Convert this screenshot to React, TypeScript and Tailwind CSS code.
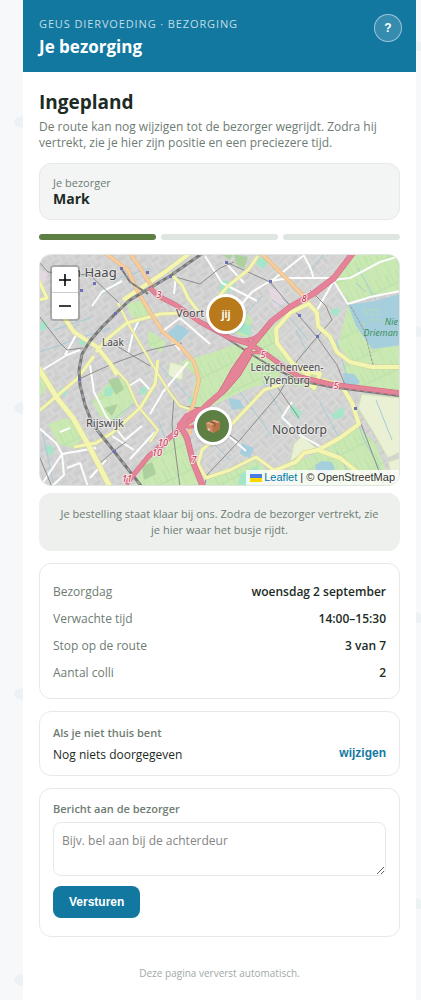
import type { ReactNode } from "react";

type Road = { d: string; w: number };

const motorways: Road[] = [
  { d: "M150 288 L158 296 L176 305 L200 322 L230 338 L250 344 L266 354 L284 367 L300 377 L330 384 L400 393", w: 4 },
  { d: "M353 253 L334 278 L313 294 L290 307 L272 321 L253 344 L243 360 L235 376 L222 392 L208 404 L200 412 L187 416 L180 425 L187 438 L193 462 L203 487", w: 5 },
  { d: "M200 414 L180 428 L164 443 L148 457 L126 484", w: 4 },
  { d: "M240 340 Q258 341 268 324 M244 358 Q252 349 266 355 M181 425 Q200 434 207 406 M184 420 Q192 408 206 408", w: 2 },
];

// Stretch where the carriageways spread apart
const spread = ["246 348 252 356 240 376 226 392 212 402 222 386 232 368"];

const primary: Road[] = [
  { d: "M105 253 L128 270 L138 292 L150 312 L163 332 L180 346 L194 362 L199 380 L194 402 L190 415 L190 434", w: 3 },
  { d: "M130 253 L140 268 L154 290 M262 254 L288 280 L308 301", w: 3 },
];

const secondary: Road[] = [
  { d: "M190 253 L165 272 L123 300 M63 316 L74 332 L97 347 L110 363 L117 375", w: 4 },
  { d: "M182 313 L160 314 L127 323 L107 339 L96 352 M39 281 L47 298 L39 300", w: 3 },
  { d: "M170 273 L182 285 L188 298 L198 311 M258 256 L248 270 L228 286 L214 302", w: 3 },
  { d: "M118 303 L130 327 L145 352 L158 374 L170 393 L180 406 L196 411", w: 2 },
  { d: "M110 363 L127 382 L137 405 L158 430 L150 442", w: 2 },
  { d: "M310 303 L290 313 L276 329 L277 343 L293 364 L310 376", w: 4 },
  { d: "M308 303 L317 313 L318 326 L330 337 L337 352 L350 362 L372 367 L400 367", w: 4 },
  { d: "M36 364 L57 398 L73 418 L90 448 L110 487", w: 5 },
  { d: "M39 411 L77 379 L94 356 M74 447 L96 443 L112 433 L140 408 L155 384 L158 360", w: 3 },
  { d: "M322 380 L342 386 L352 403 L359 424 L340 438 L318 450 L304 453 L296 462 L266 474", w: 4 },
  { d: "M318 450 L340 458 L360 474 L376 486 M293 364 L304 370 L320 374 L314 388 L306 382", w: 4 },
  { d: "M282 384 L264 390 L232 424 L202 450 L198 464 L206 478 L230 470 L256 457 L276 472", w: 3 },
];

const streets: Road[] = [
  { d: "M39 428 L56 443 L62 454 L96 448 M62 454 L64 475 L51 487 M67 468 L80 463 L88 487 M62 454 L42 484", w: 2 },
  { d: "M90 365 L94 392 L106 416 L125 440 L142 426 M129 386 L140 379 L150 390 M130 459 L155 432 M134 450 L112 436", w: 2 },
  { d: "M92 306 L102 292 L122 281 M65 355 L76 335 M128 354 L133 333 L139 320 M39 372 L67 355 L80 350", w: 2 },
  { d: "M205 256 L222 283 L257 301 M225 262 L244 283 M176 276 L174 294 M180 350 L163 331 L180 318 L210 344 M228 320 L252 292 L270 281 L290 278 L333 278", w: 2 },
  { d: "M333 280 L350 278 L380 262 L400 256 M348 304 L370 297 L400 291 M333 280 L348 304 M333 282 L316 312 M303 254 L310 267 L314 279 M270 282 L303 256", w: 2 },
  { d: "M282 417 L300 435 L323 448 M292 402 L282 417 M150 414 L163 392 L188 362 M60 432 L70 428 M106 460 L90 478 M222 430 L246 451", w: 2 },
];

const rails: Road[] = [
  { d: "M216 244 L190 262 L170 276 L150 288 L130 300 L117 312 L102 327 L90 341 L82 354 L79 370 L80 385 L85 405 L93 425 L113 450 L142 487", w: 3 },
  { d: "M121 268 L130 282 L148 294 M205 324 L240 347 L270 366 L300 381 L330 387 L400 396", w: 2 },
];

const tracks: Road[] = [
  { d: "M39 262 L48 272 L90 275 L119 303 M39 316 L59 342 L67 350 L83 348 M117 346 L130 354 L150 366", w: 1 },
  { d: "M226 262 L270 282 L317 337 L337 365 L345 385 L355 408 L385 487 M310 290 L326 306 L332 320 L317 337 L297 361 L279 394", w: 1 },
  { d: "M279 394 L240 440 L207 475 L204 487 M174 396 L172 425 L180 487 M278 388 L299 418 M222 430 L238 441", w: 1 },
  { d: "M40 458 L52 487 M79 379 L112 364 L150 350 L182 343 M110 485 L99 464 L115 450 L126 442", w: 1 },
  { d: "M172 276 L200 284 L220 268 L234 262 M170 394 L182 406 L200 408", w: 1 },
];

const greens = [
  "356 254 400 254 400 290 348 304 334 280",
  "180 362 214 352 236 344 252 348 268 356 284 368 276 382 250 388 216 404 202 410 190 408 196 376",
  "48 424 66 418 77 424 84 438 72 448 58 444",
  "106 385 122 378 130 386 134 402 116 422 100 416 92 402",
  "170 436 178 430 186 440 194 470 202 486 168 486 160 462",
  "146 460 160 446 170 460 178 486 134 486",
  "250 344 276 324 290 311 304 306 280 322 274 344 290 364",
  "343 364 400 369 400 392 346 386",
  "318 452 344 460 374 486 300 486 282 474 298 462",
  "356 424 376 444 392 486 376 486 360 472 326 450",
  "348 304 356 322 374 349 400 345 400 366 352 362 338 346",
  "39 370 48 376 46 390 39 398",
  "212 304 226 292 240 304 252 320 248 338 222 328",
  "290 370 322 376 314 388 284 384",
  "148 330 166 342 162 352 148 346",
  "208 478 240 468 256 460 270 474 262 486 206 486",
  "126 304 142 300 152 316 132 318",
];

const mints = [
  "60 388 67 388 66 396 60 395",
  "105 388 114 386 112 396 104 396",
  "46 445 53 446 53 455 46 453",
  "240 322 252 326 250 336 238 332",
  "220 280 236 282 230 292 220 292",
  "258 257 270 260 263 269 256 264",
  "331 309 340 308 338 316 331 314",
  "291 404 302 412 298 420 290 410",
  "331 415 343 406 344 416 335 420",
  "240 474 258 466 260 486 238 486",
  "41 322 47 322 46 330 40 330",
  "80 338 86 339 85 346 79 344",
  "189 398 196 396 194 404 188 403",
  "140 388 147 386 146 394 140 394",
];

const fields = [
  "362 394 400 398 400 452 388 458 372 430 358 408",
  "294 444 302 436 316 448 304 452 290 462",
  "388 462 400 458 400 486 394 486",
  "170 362 184 366 182 380 168 376",
];

const lakes = [
  "348 305 374 301 400 294 400 345 372 349 356 326",
  "343 373 354 374 360 382 352 390 344 386",
  "315 465 322 461 332 462 335 469 324 474 316 471",
  "166 334 178 324 190 331 178 343",
  "242 443 254 448 250 458 240 454",
  "228 398 240 400 244 408 232 410",
];

const canals =
  "M39 352 L110 328 M94 302 L122 276 M127 345 L143 318 M54 330 L90 318 M290 318 L308 340 M310 272 L324 254 M282 298 L296 312 M352 308 L370 345 M356 283 L366 292 M358 268 L376 300 M42 430 L54 486 M158 420 L166 440 M160 366 L190 398 M240 392 L272 436 M262 380 L290 426 M320 402 L340 440 M352 406 L364 440 M376 400 L392 440 M196 426 L230 460 M112 420 L134 404 M337 452 L356 486 M362 436 L388 484 M336 340 L350 386 M272 300 L284 308 M296 330 L306 350 M244 316 L262 296 M120 278 L150 268";

const stations = ["121 268", "94 283", "81 290", "147 272", "115 313", "170 276", "226 262", "270 281", "299 315", "317 336", "355 408", "79 379", "114 451"];

const shields = [
  { n: "3", x: 159, y: 298 },
  { n: "8", x: 304, y: 302 },
  { n: "5", x: 263, y: 358 },
  { n: "5", x: 336, y: 389 },
  { n: "9", x: 176, y: 437 },
  { n: "10", x: 163, y: 446 },
  { n: "10", x: 157, y: 456 },
  { n: "11", x: 127, y: 482 },
  { n: "7", x: 194, y: 463 },
];

function Lines({ roads, color, extra = 0, dash }: { roads: Road[]; color: string; extra?: number; dash?: string }) {
  return (
    <g fill="none" stroke={color} strokeLinejoin="round" strokeDasharray={dash}>
      {roads.map((r) => (
        <path key={r.d} d={r.d} strokeWidth={r.w + extra} />
      ))}
    </g>
  );
}

function Polys({ items, fill, stroke }: { items: string[]; fill: string; stroke?: string }) {
  return (
    <g fill={fill} stroke={stroke}>
      {items.map((p) => (
        <polygon key={p} points={p} />
      ))}
    </g>
  );
}

function MapTiles() {
  return (
    <svg viewBox="40 255 359 230" preserveAspectRatio="xMidYMid slice" className="block h-full w-full" aria-hidden="true">
      <defs>
        <pattern id="blocksA" width="17" height="13" patternUnits="userSpaceOnUse" patternTransform="rotate(-33)">
          <rect width="17" height="13" fill="#d2d1d1" />
          <path d="M0 0H17M0 6H11M0 0V13M11 0V6M6 6V13" stroke="#dededd" fill="none" />
          <path d="M2 3H9M8 10H15" stroke="#c9c8c8" fill="none" />
        </pattern>
        <pattern id="blocksB" width="14" height="19" patternUnits="userSpaceOnUse" patternTransform="rotate(-42)">
          <rect width="14" height="19" fill="#d3d2d2" />
          <path d="M0 0H14M0 5H14M0 12H9M0 0V19M9 5V19" stroke="#dededd" fill="none" />
          <path d="M2 9H7M11 8V16" stroke="#c8c9cb" fill="none" />
        </pattern>
        <pattern id="parcels" width="26" height="11" patternUnits="userSpaceOnUse" patternTransform="rotate(64)">
          <path d="M0 0H26M0 5H12M12 0V11" stroke="#b9dfa9" fill="none" />
        </pattern>
      </defs>
      <rect x="39" y="254" width="362" height="232" fill="url(#blocksA)" />
      <polygon points="250 254 353 254 345 380 360 425 300 486 205 486 200 412 250 343" fill="url(#blocksB)" />
      <Polys items={greens} fill="#c9e8b2" />
      <Polys items={greens} fill="url(#parcels)" />
      <Polys items={fields} fill="#eaf0d3" stroke="#cfe3b4" />
      <Polys items={mints} fill="#a5e6c8" />
      <path d="M108 380 l10 -3 6 12 -8 6z M234 254 l14 3 -4 12 -8 -5z M215 250 l18 2 -3 8z M104 408 l14 -4 -6 12z M142 466 l10 -4 4 12 -12 6z" fill="#add19e" />
      <path d="M268 288 l12 2 8 12 -14 6z M39 268 l9 6 -4 10 -5 -2z" fill="#e3d7e0" />
      <Polys items={lakes} fill="#a6cfdd" />
      <path d={canals} fill="none" stroke="#a3cbd6" />
      <path d="M363 310 h16 M364 314 h14 M370 320 h10 M362 324 h6" stroke="#b7df9f" strokeDasharray="4 2" />
      <path d="M333 280 L350 305 L364 330 L374 368" fill="none" stroke="#9b9b9b" strokeDasharray="3 1" />
      <Lines roads={streets} color="#fdfdfd" />
      <Lines roads={tracks} color="#8c8c8c" />
      <Lines roads={secondary} color="#d3d49c" extra={1} />
      <Lines roads={secondary} color="#f4f5ae" />
      <Lines roads={primary} color="#e2b482" extra={1} />
      <Lines roads={primary} color="#f8cd9c" />
      <Lines roads={rails} color="#777777" />
      <Lines roads={rails} color="#a0a0a0" extra={-1} dash="4 4" />
      <Lines roads={motorways} color="#d26a80" extra={1} />
      <Polys items={spread} fill="#e58499" stroke="#d26a80" />
      <Lines roads={motorways} color="#e58499" />
      <g fill="#6d70b5">
        {stations.map((s) => {
          const [x, y] = s.split(" ").map(Number);
          return <rect key={s} x={x - 1} y={y - 1} width="3" height="3" />;
        })}
      </g>
      <g fontFamily="'Noto Sans', sans-serif" fontStyle="italic" fontSize="9" fill="#c02c4c" stroke="#f7e2e5" strokeWidth="2" paintOrder="stroke" textAnchor="middle">
        {shields.map((s) => (
          <text key={s.n + s.x} x={s.x} y={s.y}>{s.n}</text>
        ))}
      </g>
      <g fontFamily="'Noto Sans', sans-serif" fill="#4a4a4a" stroke="#eeeeee" strokeOpacity="0.7" strokeWidth="2" paintOrder="stroke">
        <text x="73" y="277" fontSize="13">n Haag</text>
        <text x="176" y="317" fontSize="11">Voort</text>
        <text x="102" y="346" fontSize="10">Laak</text>
        <text x="86" y="427" fontSize="11">Rijswijk</text>
        <text x="272" y="434" fontSize="12">Nootdorp</text>
        <text x="287" y="371" fontSize="10" textAnchor="middle">Leidschenveen-</text>
        <text x="287" y="384" fontSize="10" textAnchor="middle">Ypenburg</text>
      </g>
      <g fontFamily="'Noto Sans', sans-serif" fontStyle="italic" fontSize="9" fill="#3f8f5c" textAnchor="end">
        <text x="398" y="325">Nie</text>
        <text x="398" y="336">Drieman</text>
      </g>
    </svg>
  );
}

function PackageIcon() {
  return (
    <svg viewBox="0 0 16 16" className="size-4" aria-hidden="true">
      <path d="M1 5 L9 2 L15 4 L15 11 L8 15 L2 12Z" fill="#c98a5d" />
      <path d="M1 5 L9 2 L15 4 L7 7Z" fill="#e0ab80" />
      <path d="M7 7 L15 4 L15 11 L8 15Z" fill="#b87449" />
      <path d="M4 4 L6 3 L12 5 L9 6Z" fill="#8a5638" />
      <path d="M9 6 L11 5 L11 8 L9 9Z" fill="#9c6240" />
      <path d="M3 10 L5 11 L5 13 L3 12Z" fill="#e5cfd9" />
    </svg>
  );
}

function DeliveryMap() {
  return (
    <div className="relative mt-3.5 h-[232px] overflow-hidden rounded-xl border border-[#dfe5e1]">
      <MapTiles />
      <div className="absolute top-2.5 left-2.5 flex flex-col overflow-hidden rounded-sm border-2 border-black/20 bg-clip-padding text-black">
        <button type="button" aria-label="Inzoomen" className="grid size-[26px] place-items-center border-b border-[#cccccc] bg-white">
          <svg viewBox="0 0 12 12" className="size-3"><path d="M6 0V12M0 6H12" stroke="currentColor" strokeWidth="1.6" /></svg>
        </button>
        <button type="button" aria-label="Uitzoomen" className="grid size-[26px] place-items-center bg-white">
          <svg viewBox="0 0 12 12" className="size-3"><path d="M0 6H12" stroke="currentColor" strokeWidth="1.6" /></svg>
        </button>
      </div>
      <div className="absolute top-[39px] left-[166px] grid size-10 place-items-center rounded-full border-3 border-white bg-[#b97a1c] text-[10px] font-bold text-white shadow">
        jij
      </div>
      <div className="absolute top-[152px] left-[154px] grid size-[38px] place-items-center rounded-full border-3 border-white bg-[#5d7f43] shadow">
        <PackageIcon />
      </div>
      <div className="absolute right-0 bottom-0 flex items-center gap-[3px] bg-white/80 px-1 font-['Liberation_Sans',sans-serif] text-[11px] leading-[15px] text-[#333333]">
        <a href="#leaflet" className="flex items-center gap-0.5 text-[#0078a8]">
          <svg viewBox="0 0 12 8" className="h-2 w-3"><path fill="#4c7be1" d="M0 0h12v4H0z" /><path fill="#ffd500" d="M0 4h12v4H0z" /></svg>
          Leaflet
        </a>
        <span>| © OpenStreetMap</span>
      </div>
    </div>
  );
}

function Card({ className = "", children }: { className?: string; children: ReactNode }) {
  return <section className={`rounded-xl border border-[#e6e9e8] px-[13px] ${className}`}>{children}</section>;
}

const details = [
  ["Bezorgdag", "woensdag 2 september"],
  ["Verwachte tijd", "14:00–15:30"],
  ["Stop op de route", "3 van 7"],
  ["Aantal colli", "2"],
];

export default function App() {
  return (
    <div className="relative min-h-screen bg-[#f6f8fa] pr-[5px] pl-[23px] font-['Open_Sans','Noto_Sans',sans-serif] text-[12px] leading-4 text-[#1c2b24]">
      {/* Faint spots behind the column */}
      <svg className="absolute inset-0 h-full w-full" aria-hidden="true">
        <defs>
          <pattern id="spots" width="401" height="286" patternUnits="userSpaceOnUse">
            <ellipse cx="24" cy="122" rx="10" ry="6" fill="#ecf1f4" />
          </pattern>
          <pattern id="spotsRight" width="421" height="286" patternUnits="userSpaceOnUse">
            <ellipse cx="415" cy="45" rx="9" ry="5" fill="#ecf1f4" transform="rotate(20 415 45)" />
          </pattern>
        </defs>
        <rect width="100" height="100%" fill="url(#spots)" />
        <rect width="421" height="100%" fill="url(#spotsRight)" />
      </svg>

      <div className="relative min-h-screen bg-white">
        <header className="flex h-[72px] items-start justify-between bg-[#1278a0] px-4 pt-3.5 text-white">
          <div>
            <p className="text-[11px] leading-5 tracking-[0.08em] text-white/75 uppercase">Geus Diervoeding · Bezorging</p>
            <p className="text-[17px] leading-[26px] font-bold">Je bezorging</p>
          </div>
          <button type="button" aria-label="Uitleg" className="-mr-0.5 grid size-7 place-items-center rounded-full border border-white/50 bg-white/15 font-['Liberation_Sans',sans-serif] text-[12px] font-bold">
            ?
          </button>
        </header>

        <main className="px-4 pt-[18px]">
          <h1 className="text-[19px] leading-6 font-bold">Ingepland</h1>
          <p className="mt-[5px] text-[#6e7c73]">
            De route kan nog wijzigen tot de bezorger wegrijdt. Zodra hij vertrekt, zie je hier zijn positie en een preciezere tijd.
          </p>

          <Card className="mt-3 bg-[#f3f5f5] pt-[11px] pb-3">
            <p className="text-[11px] leading-4 text-[#6e7c73]">Je bezorger</p>
            <p className="text-[14px] leading-4 font-bold">Mark</p>
          </Card>

          <div className="mt-3.5 grid grid-cols-3 gap-[5px]">
            <span className="h-1.5 rounded-full bg-[#5d7f43]" />
            <span className="h-1.5 rounded-full bg-[#dfe5e1]" />
            <span className="h-1.5 rounded-full bg-[#dfe5e1]" />
          </div>

          <DeliveryMap />

          <p className="mt-[7px] rounded-xl bg-[#edf0ed] px-5 py-[13px] text-center text-[11px] leading-4 text-[#6e7c73]">
            Je bestelling staat klaar bij ons. Zodra de bezorger vertrekt, zie je hier waar het busje rijdt.
          </p>

          <Card className="mt-3 pt-3.5 pb-3">
            <dl>
              {details.map(([label, value]) => (
                <div key={label} className="flex justify-between py-[5px] leading-[17px]">
                  <dt className="text-[#6e7c73]">{label}</dt>
                  <dd className="font-semibold">{value}</dd>
                </div>
              ))}
            </dl>
          </Card>

          <Card className="mt-3 pt-[13px] pb-2.5">
            <p className="text-[11px] leading-4 font-semibold text-[#6e7c73]">Als je niet thuis bent</p>
            <div className="mt-1 flex items-start justify-between">
              <p className="leading-5">Nog niets doorgegeven</p>
              <button type="button" className="font-['Liberation_Sans',sans-serif] font-bold text-[#1278a0]">wijzigen</button>
            </div>
          </Card>

          <Card className="mt-3 pt-3 pb-[18px]">
            <label htmlFor="message" className="block text-[11px] leading-4 font-semibold text-[#6e7c73]">Bericht aan de bezorger</label>
            <textarea
              id="message"
              placeholder="Bijv. bel aan bij de achterdeur"
              className="mt-[5px] block h-[54px] w-full resize-y rounded-lg border border-[#e6e9e8] px-2 py-2.5 placeholder:text-[#858585]"
            />
            <button type="button" className="mt-2.5 block h-8 rounded-lg bg-[#1278a0] px-4 font-['Liberation_Sans',sans-serif] font-bold text-white">
              Versturen
            </button>
          </Card>

          <p className="mt-7 text-center text-[10px] leading-4 text-[#a0a9a4]">Deze pagina ververst automatisch.</p>
        </main>
      </div>
    </div>
  );
}
